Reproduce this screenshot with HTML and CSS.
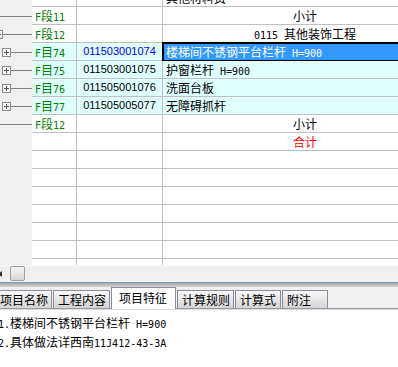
FILE: index.html
```html
<!DOCTYPE html>
<html>
<head>
<meta charset="utf-8">
<link rel="stylesheet" href="styles.css">
</head>
<body>
<div class="grid">
  <div class="rows">
    <div class="row">
      <div class="tree"></div>
      <div class="cell c1"></div><div class="cell c2"></div><div class="cell c3">其他材料费</div>
    </div>
    <div class="row">
      <div class="tree"><span class="branch"></span></div>
      <div class="cell c1"><span class="en">F</span>段<span class="en">11</span></div>
      <div class="cell c2"></div>
      <div class="cell c3 mid">小计</div>
    </div>
    <div class="row">
      <div class="tree"><svg class="pm cut" width="9" height="9" viewBox="0 0 9 9"><rect x="0.5" y="0.5" width="8" height="8" fill="#f7f7f7" stroke="#8c8c8c"/><path d="M2 4.5h5M4.5 2v5" stroke="#555"/></svg><span class="branch"></span></div>
      <div class="cell c1"><span class="en">F</span>段<span class="en">12</span></div>
      <div class="cell c2"></div>
      <div class="cell c3 mid"><span class="en">0115 </span>其他装饰工程</div>
    </div>
    <div class="row item">
      <div class="tree"><svg class="pm" width="9" height="9" viewBox="0 0 9 9"><rect x="0.5" y="0.5" width="8" height="8" fill="#f7f7f7" stroke="#8c8c8c"/><path d="M2 4.5h5M4.5 2v5" stroke="#555"/></svg><span class="branch"></span></div>
      <div class="cell c1"><span class="en">F</span>目<span class="en">74</span></div>
      <div class="cell c2 blue">011503001074</div>
      <div class="cell c3 sel">楼梯间不锈钢平台栏杆<span class="en"> H=900</span></div>
    </div>
    <div class="row item">
      <div class="tree"><svg class="pm" width="9" height="9" viewBox="0 0 9 9"><rect x="0.5" y="0.5" width="8" height="8" fill="#f7f7f7" stroke="#8c8c8c"/><path d="M2 4.5h5M4.5 2v5" stroke="#555"/></svg><span class="branch"></span></div>
      <div class="cell c1"><span class="en">F</span>目<span class="en">75</span></div>
      <div class="cell c2">011503001075</div>
      <div class="cell c3">护窗栏杆<span class="en"> H=900</span></div>
    </div>
    <div class="row item">
      <div class="tree"><svg class="pm" width="9" height="9" viewBox="0 0 9 9"><rect x="0.5" y="0.5" width="8" height="8" fill="#f7f7f7" stroke="#8c8c8c"/><path d="M2 4.5h5M4.5 2v5" stroke="#555"/></svg><span class="branch"></span></div>
      <div class="cell c1"><span class="en">F</span>目<span class="en">76</span></div>
      <div class="cell c2">011505001076</div>
      <div class="cell c3">洗面台板</div>
    </div>
    <div class="row item">
      <div class="tree"><svg class="pm" width="9" height="9" viewBox="0 0 9 9"><rect x="0.5" y="0.5" width="8" height="8" fill="#f7f7f7" stroke="#8c8c8c"/><path d="M2 4.5h5M4.5 2v5" stroke="#555"/></svg><span class="branch"></span></div>
      <div class="cell c1"><span class="en">F</span>目<span class="en">77</span></div>
      <div class="cell c2">011505005077</div>
      <div class="cell c3">无障碍抓杆</div>
    </div>
    <div class="row">
      <div class="tree"><span class="branch"></span></div>
      <div class="cell c1"><span class="en">F</span>段<span class="en">12</span></div>
      <div class="cell c2"></div>
      <div class="cell c3 mid">小计</div>
    </div>
    <div class="row">
      <div class="tree"></div>
      <div class="cell c1"></div><div class="cell c2"></div><div class="cell c3 mid red">合计</div>
    </div>
    <div class="row"><div class="tree"></div><div class="cell c1"></div><div class="cell c2"></div><div class="cell c3"></div></div>
    <div class="row"><div class="tree"></div><div class="cell c1"></div><div class="cell c2"></div><div class="cell c3"></div></div>
    <div class="row"><div class="tree"></div><div class="cell c1"></div><div class="cell c2"></div><div class="cell c3"></div></div>
    <div class="row"><div class="tree"></div><div class="cell c1"></div><div class="cell c2"></div><div class="cell c3"></div></div>
    <div class="row"><div class="tree"></div><div class="cell c1"></div><div class="cell c2"></div><div class="cell c3"></div></div>
    <div class="row"><div class="tree"></div><div class="cell c1"></div><div class="cell c2"></div><div class="cell c3"></div></div>
    <div class="row"><div class="tree"></div><div class="cell c1"></div><div class="cell c2"></div><div class="cell c3"></div></div>
  </div>
</div>
<div class="hscroll"><span class="arrow"></span><span class="thumb"></span></div>
<div class="splitter"></div>
<div class="tabs">
  <div class="tab first">项目名称</div>
  <div class="tab">工程内容</div>
  <div class="tab active">项目特征</div>
  <div class="tab">计算规则</div>
  <div class="tab">计算式</div>
  <div class="tab">附注</div>
</div>
<div class="content">
  <div class="line"><span class="en">1.</span>楼梯间不锈钢平台栏杆<span class="en"> H=900</span></div>
  <div class="line"><span class="en">2.</span>具体做法详西南<span class="en">11J412-43-3A</span></div>
</div>
</body>
</html>
```

FILE: styles.css
```css
* {
  box-sizing: border-box;
  margin: 0;
  padding: 0;
}

html,
body {
  width: 398px;
  height: 367px;
  overflow: hidden;
}

body {
  background: #f0f0f0;
  font-family: "Noto Sans CJK SC", "Liberation Sans", sans-serif;
  font-size: 12px;
  color: #000;
}

.en {
  font-family: "DejaVu Sans Mono", "Liberation Mono", monospace;
  font-size: 10px;
}

.grid {
  height: 265px;
  overflow: hidden;
}

.rows {
  margin-top: -11px;
  width: 448px;
}

.row {
  display: flex;
  height: 18px;
}

.tree {
  width: 32px;
  flex: none;
  display: flex;
  align-items: center;
}

.branch {
  flex: 1;
  height: 1px;
  background: #808080;
}

.pm {
  flex: none;
  display: block;
  margin-left: 2px;
}

.pm.cut {
  margin-left: -6px;
}

.cell {
  flex: none;
  height: 18px;
  background: #fff;
  border-right: 1px solid #c0c0c0;
  border-bottom: 1px solid #c0c0c0;
  line-height: 17px;
  white-space: nowrap;
  overflow: hidden;
}

.c1 {
  width: 45px;
  padding-left: 3px;
  color: #008000;
}

.c2 {
  width: 86px;
  text-align: center;
  font-family: "Liberation Sans", sans-serif;
  font-size: 11px;
}

.c3 {
  width: 285px;
  padding-left: 3px;
}

.c3.mid {
  text-align: center;
  padding-left: 0;
}

.row.item .cell {
  background: #e0ffff;
}

.row.item .cell.sel {
  background: #3399ff;
  color: #fff;
  overflow: visible;
  outline: 2px solid #000;
  outline-offset: -1px;
}

.blue {
  color: #0000ff;
}

.red {
  color: #ff0000;
}

.hscroll {
  height: 17px;
  display: flex;
  align-items: flex-start;
  background: #f0f0f0;
  border-top: 1px solid #fafafa;
}

.arrow {
  width: 0;
  height: 0;
  margin-left: -2px;
  margin-top: 5px;
  border-right: 4px solid #303030;
  border-top: 3px solid transparent;
  border-bottom: 3px solid transparent;
}

.thumb {
  width: 15px;
  height: 15px;
  margin-left: 8px;
  border: 1px solid #a0a0a0;
  border-radius: 2px;
  background: linear-gradient(#f6f6f6, #d6d6d6);
}

.splitter {
  height: 5px;
  border-top: 1px solid #7c9cc0;
  background: linear-gradient(#a6a6a6, #d4d4d4);
}

.tabs {
  display: flex;
  align-items: flex-end;
  gap: 1px;
  height: 22px;
  border-bottom: 1px solid #9a9aa6;
}

.tab {
  height: 18px;
  min-width: 46px;
  padding: 0 3px 0 4px;
  border: 1px solid #8c8c9c;
  border-bottom: none;
  background: linear-gradient(#f8f8f8, #d4d4d4);
  line-height: 17px;
  font-size: 12px;
  white-space: nowrap;
}

.tab.first {
  margin-left: -5px;
}

.tab.active {
  height: 22px;
  margin-bottom: -1px;
  padding: 0 8px 0 7px;
  background: #fff;
  line-height: 20px;
}

.content {
  height: 58px;
  background: #fff;
  border-top: 1px solid #dadada;
  padding-top: 4px;
}

.line {
  margin-left: -2px;
  line-height: 17px;
  white-space: nowrap;
}
```
